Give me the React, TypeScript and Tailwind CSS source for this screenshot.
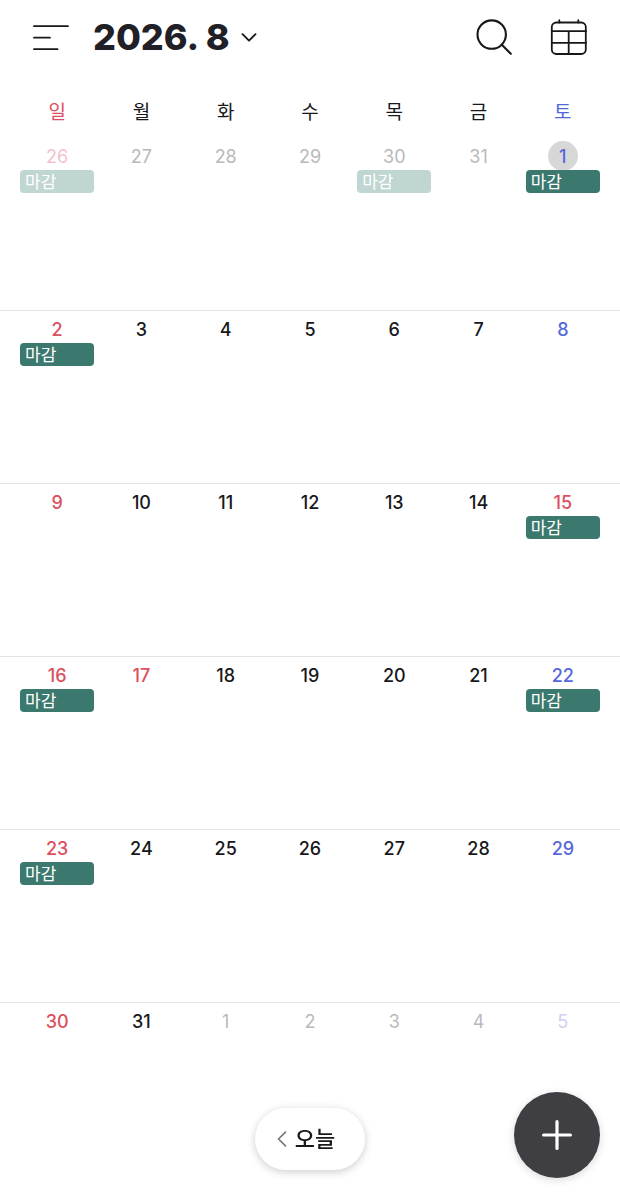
type Tone = "red" | "blue" | "black" | "fadedRed" | "fadedBlue" | "faded";

interface Day {
  label: number;
  tone: Tone;
  event?: string;
  selected?: boolean;
}

const toneClass: Record<Tone, string> = {
  red: "text-[#dc5060]",
  blue: "text-[#5468dc]",
  black: "text-[#18181b]",
  fadedRed: "text-[#f3c1cb]",
  fadedBlue: "text-[#cfd1ee]",
  faded: "text-[#b9b9ba]",
};

const weekdays: { name: string; tone: Tone }[] = [
  { name: "일", tone: "red" },
  { name: "월", tone: "black" },
  { name: "화", tone: "black" },
  { name: "수", tone: "black" },
  { name: "목", tone: "black" },
  { name: "금", tone: "black" },
  { name: "토", tone: "blue" },
];

const eventDates = [-5, -1, 1, 2, 15, 16, 22, 23];
const holidays = [15, 17];

function makeDay(index: number): Day {
  const date = index - 5;
  const column = index % 7;
  const event = eventDates.includes(date) ? "마감" : undefined;
  if (date < 1 || date > 31) {
    const label = date < 1 ? date + 31 : date - 31;
    const tone = column === 0 ? "fadedRed" : column === 6 ? "fadedBlue" : "faded";
    return { label, tone, event };
  }
  const tone =
    column === 0 || holidays.includes(date) ? "red" : column === 6 ? "blue" : "black";
  return { label: date, tone, event, selected: date === 1 };
}

const weeks: Day[][] = Array.from({ length: 6 }, (_, w) =>
  Array.from({ length: 7 }, (_, d) => makeDay(w * 7 + d)),
);

function DayCell({ day }: { day: Day }) {
  const faded = day.tone.startsWith("faded");
  return (
    <td className="flex flex-col items-center px-[5px] pt-[3px]">
      <button
        type="button"
        className={`flex size-[30px] shrink-0 items-center justify-center rounded-full pt-px text-[18px] leading-none ${
          faded ? "font-normal" : "font-medium"
        } ${toneClass[day.tone]} ${day.selected ? "bg-[#d7d7d8]" : ""}`}
      >
        {day.label}
      </button>
      {day.event && (
        <div
          className={`-mt-px flex h-[23px] w-full items-center rounded-[4px] pt-0.5 pl-[5px] text-[17px] leading-none text-white ${
            faded ? "bg-[#c0d6d3]" : "bg-[#3b796e]"
          }`}
        >
          {day.event}
        </div>
      )}
    </td>
  );
}

export default function App() {
  return (
    <main className="min-h-screen bg-white font-['Inter','Noto_Sans_CJK_KR',sans-serif] text-[#18181b]">
      <header className="flex h-[75px] items-center px-8">
        <button type="button" aria-label="메뉴">
          <svg width="38" height="28" viewBox="0 0 38 28" fill="none" stroke="currentColor" strokeWidth="1.8" strokeLinecap="round">
            <path d="M2 2.2H36M2 13.7H18M2 25.2H25.5" />
          </svg>
        </button>
        <button type="button" className="ml-[23px] flex items-center gap-[11px]">
          <h1 className="pb-0.5 text-[36px] leading-none font-extrabold text-[#202026]">2026. 8</h1>
          <svg width="16" height="10" viewBox="0 0 16 10" fill="none" stroke="currentColor" strokeWidth="1.9" strokeLinecap="round" strokeLinejoin="round">
            <path d="M1.5 1.2L8 7.7L14.5 1.2" />
          </svg>
        </button>
        <div className="ml-auto flex items-center gap-9">
          <button type="button" aria-label="검색">
            <svg width="38" height="38" viewBox="0 0 38 38" fill="none" stroke="currentColor" strokeWidth="2.1" strokeLinecap="round">
              <circle cx="15.7" cy="15.6" r="14.2" />
              <path d="M25.8 25.7L34.8 34.7" />
            </svg>
          </button>
          <button type="button" aria-label="달력 보기">
            <svg width="38" height="38" viewBox="0 0 38 38" fill="none" stroke="currentColor" strokeWidth="1.8" strokeLinecap="round">
              <rect x="1.8" y="3.5" width="34" height="31.5" rx="4.5" />
              <path d="M9.3 1.2V3.5M28.3 1.2V3.5M2 12.2H36M2 23.8H36M18.7 12.2V35" />
            </svg>
          </button>
        </div>
      </header>

      <table className="block w-full">
        <thead className="block">
          <tr className="grid h-[62px] grid-cols-7 px-[15px]">
            {weekdays.map((weekday) => (
              <th
                key={weekday.name}
                scope="col"
                className={`pt-[26px] text-center text-[19px] leading-6 font-normal ${toneClass[weekday.tone]}`}
              >
                {weekday.name}
              </th>
            ))}
          </tr>
        </thead>
        <tbody className="block">
          {weeks.map((week, index) => (
            <tr
              key={index}
              className="grid h-[173px] grid-cols-7 border-t border-[#e2e2e4] px-[15px] first:border-transparent"
            >
              {week.map((day) => (
                <DayCell key={day.label} day={day} />
              ))}
            </tr>
          ))}
        </tbody>
      </table>

      <button
        type="button"
        className="fixed bottom-[30px] left-1/2 flex h-[62px] w-[110px] -translate-x-1/2 items-center justify-center gap-2 rounded-full bg-white pr-2 text-[22px] leading-none font-medium shadow-[0_2px_8px_rgba(0,0,0,0.2)]"
      >
        <svg width="10" height="16" viewBox="0 0 10 16" fill="none" stroke="#77777a" strokeWidth="1.7" strokeLinecap="round" strokeLinejoin="round">
          <path d="M8.5 1.2L1.5 8L8.5 14.8" />
        </svg>
        오늘
      </button>
      <button
        type="button"
        aria-label="일정 추가"
        className="fixed right-5 bottom-[22px] flex size-[86px] items-center justify-center rounded-full bg-[#3f3e43] text-white shadow-[0_2px_8px_rgba(0,0,0,0.15)]"
      >
        <svg width="32" height="32" viewBox="0 0 32 32" fill="none" stroke="currentColor" strokeWidth="3.2" strokeLinecap="round">
          <path d="M16 2.6V29.4M2.6 16H29.4" />
        </svg>
      </button>
    </main>
  );
}
